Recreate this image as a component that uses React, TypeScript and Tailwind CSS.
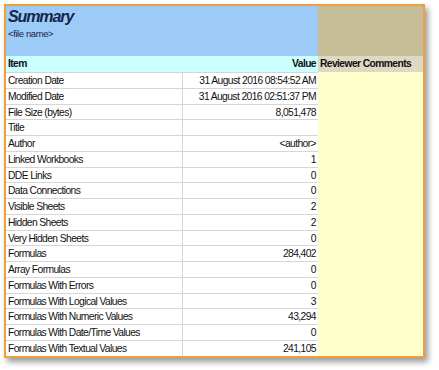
// ===== WORKBOOK SUMMARY SHEET =====
// A spreadsheet-style summary: item / value pairs with a reviewer comments column.

const rows: [string, string][] = [
  ["Creation Date", "31 August 2016 08:54:52 AM"],
  ["Modified Date", "31 August 2016 02:51:37 PM"],
  ["File Size (bytes)", "8,051,478"],
  ["Title", ""],
  ["Author", "<author>"],
  ["Linked Workbooks", "1"],
  ["DDE Links", "0"],
  ["Data Connections", "0"],
  ["Visible Sheets", "2"],
  ["Hidden Sheets", "2"],
  ["Very Hidden Sheets", "0"],
  ["Formulas", "284,402"],
  ["Array Formulas", "0"],
  ["Formulas With Errors", "0"],
  ["Formulas With Logical Values", "3"],
  ["Formulas With Numeric Values", "43,294"],
  ["Formulas With Date/Time Values", "0"],
  ["Formulas With Textual Values", "241,105"],
];

export default function App() {
  return (
    <div className="w-[439px] h-[370px] bg-white pl-[4px] pt-[4px] font-['Liberation_Sans',Arial,sans-serif] text-[10.3px] tracking-[-0.6px] text-[#111]">
      <div className="w-[421px] border-2 border-[#eea03c] shadow-[3px_4px_6px_rgba(0,0,0,0.4)]">
        {/* ===== TITLE BAND ===== */}
        <div className="flex h-[50px]">
          <div className="w-[312px] bg-[#9dcbf8] pl-[2px] pt-[1px]">
            <div className="text-[16px] leading-[19px] font-bold italic tracking-[-1.1px] text-[#16264a]">
              Summary
            </div>
            <div className="text-[9.5px] leading-[12px] mt-[2px] tracking-[-0.4px] text-[#1c2540]">
              &lt;file name&gt;
            </div>
          </div>
          <div className="flex-1 bg-[#c4bd98]" />
        </div>

        {/* ===== COLUMN HEADERS ===== */}
        <div className="flex h-[16px] leading-[16px] font-bold">
          <div className="w-[312px] flex bg-[#ccffff]">
            <div className="w-[177px] pl-[2px]">Item</div>
            <div className="flex-1 text-right pr-[2px]">Value</div>
          </div>
          <div className="flex-1 bg-[#ddd9c4] pl-[2px]">Reviewer Comments</div>
        </div>

        {/* ===== DATA ROWS ===== */}
        {rows.map(([item, value], i) => (
          <div key={i} className="flex h-[15.75px] leading-[15px]">
            <div className="w-[312px] flex border-t border-[#d6d6d6]">
              <div className="w-[177px] pl-[2px] border-r border-[#d6d6d6] truncate">{item}</div>
              <div className="flex-1 text-right pr-[2px]">{value}</div>
            </div>
            <div className="flex-1 bg-[#ffffcc]" />
          </div>
        ))}
      </div>
    </div>
  );
}
